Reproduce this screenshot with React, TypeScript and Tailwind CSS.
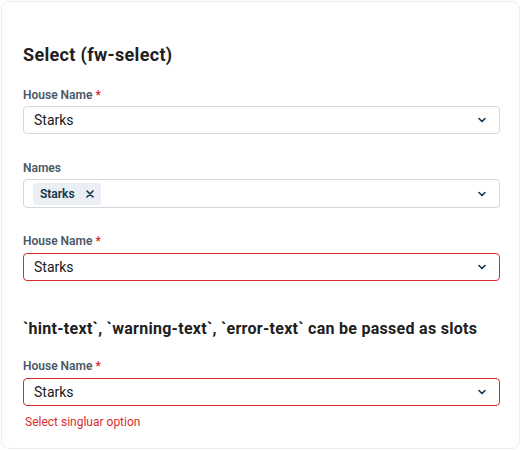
import React from "react";

const font = { fontFamily: "Roboto, 'Noto Sans', sans-serif" };

function Chevron() {
  return (
    <svg width="10" height="10" viewBox="0 0 10 10" className="shrink-0">
      <path d="M2 3.5 L5 6.5 L8 3.5" fill="none" stroke="#12344d" strokeWidth="1.6" strokeLinecap="round" strokeLinejoin="round" />
    </svg>
  );
}

function Label({ text, required }: { text: string; required?: boolean }) {
  return (
    <div className="flex items-center h-4 text-[12px] leading-4 font-semibold text-[#475867]">
      <span>{text}</span>
      {required && <span className="ml-[3px] text-[#d72d30]">*</span>}
    </div>
  );
}

function SelectBox({ error, children, h = "h-[28px]", pl = "pl-[10px]" }: { error?: boolean; children: React.ReactNode; h?: string; pl?: string }) {
  return (
    <div
      className={`flex items-center justify-between ${h} rounded-[4px] border bg-white ${pl} pr-[12px] ${
        error ? "border-[#d72d30]" : "border-[#cfd7df]"
      }`}
    >
      <div className="flex items-center text-[14px] text-[#1b1b1b]">{children}</div>
      <Chevron />
    </div>
  );
}

export default function App() {
  return (
    <div className="p-px bg-white" style={font}>
      <div className="w-[519px] h-[448px] rounded-[8px] border border-[#ebeff3] bg-white pl-[21px] pt-[41px]">
        <div className="w-[477px]">
          <div className="h-6 text-[18px] leading-6 font-bold tracking-[0.33px] text-[#202020]">Select (fw-select)</div>
          <div className="mt-[20px]">
            <Label text="House Name" required />
            <div className="mt-[3px]">
              <SelectBox>Starks</SelectBox>
            </div>
          </div>
          <div className="mt-[26px]">
            <Label text="Names" />
            <div className="mt-[3px]">
              <SelectBox h="h-[29px]" pl="pl-[9px]">
                <span className="flex items-center h-[22px] rounded-[4px] bg-[#ebeff3] pl-[7px] pr-[7px] text-[12px] font-semibold text-[#12344d]">
                  Starks
                  <svg width="8" height="8" viewBox="0 0 8 8" className="ml-[11px]">
                    <path d="M1 1 L7 7 M7 1 L1 7" stroke="#12344d" strokeWidth="1.6" strokeLinecap="round" />
                  </svg>
                </span>
              </SelectBox>
            </div>
          </div>
          <div className="mt-[25px]">
            <Label text="House Name" required />
            <div className="mt-[4px]">
              <SelectBox error>Starks</SelectBox>
            </div>
          </div>
          <div className="mt-[38px] h-5 text-[16px] leading-5 font-bold tracking-[0.28px] text-[#202020] whitespace-nowrap">
            `hint-text`, `warning-text`, `error-text` can be passed as slots
          </div>
          <div className="mt-[19px]">
            <Label text="House Name" required />
            <div className="mt-[4px]">
              <SelectBox error>Starks</SelectBox>
            </div>
            <div className="mt-[8px] h-4 text-[12px] leading-4 text-[#d72d30] pl-[2px]">Select singluar option</div>
          </div>
        </div>
      </div>
    </div>
  );
}
